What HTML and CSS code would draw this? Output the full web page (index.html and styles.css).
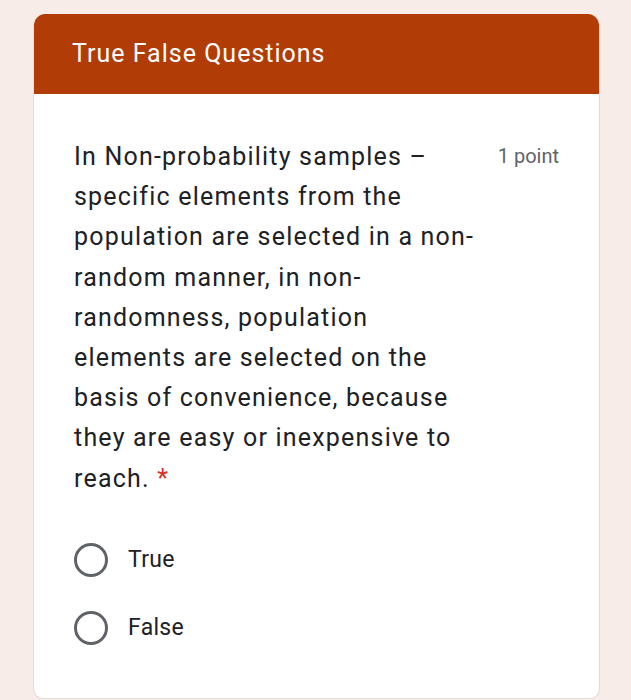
FILE: index.html
```html
<!DOCTYPE html>
<html lang="en">
<head>
    <meta charset="UTF-8">
    <meta name="viewport" content="width=device-width, initial-scale=1.0">
    <title>True False Questions</title>
    <link rel="stylesheet" href="styles.css">
</head>
<body>
    <div class="card">
        <div class="card-header">
            <h1>True False Questions</h1>
        </div>

        <!-- question -->
        <div class="question">
            <div class="question-top">
                <p class="question-text">In Non-probability samples –<br>specific elements from the<br>population are selected in a non-<br>random manner, in non-<br>randomness, population<br>elements are selected on the<br>basis of convenience, because<br>they are easy or inexpensive to<br>reach. <span class="required">*</span></p>
                <span class="points">1 point</span>
            </div>

            <label class="option">
                <span class="radio"></span>
                <span class="option-label">True</span>
            </label>
            <label class="option">
                <span class="radio"></span>
                <span class="option-label">False</span>
            </label>
        </div>
    </div>
</body>
</html>
```

FILE: styles.css
```css
body {
    margin: 0;
    padding: 14px 31px 0 33px;
    background-color: #f7ece7;
    font-family: Roboto, "Open Sans", sans-serif;
    color: #202124;
}
.card {
    background-color: white;
    border-radius: 12px 12px 10px 10px;
    border: 1px solid #e3dcd9;
    border-top: none;
    height: 684px;
    overflow: hidden;
}
.card-header {
    background-color: #b23c05;
    height: 80px;
    padding: 0 38px;
    display: flex;
    align-items: center;
}
.card-header h1 {
    margin: 0 0 2px;
    font-size: 25px;
    font-weight: 400;
    letter-spacing: 1px;
    color: white;
}
.question {
    padding: 43px 40px 0 40px;
}
.question-top {
    display: flex;
    justify-content: space-between;
    align-items: flex-start;
}
.question-text {
    margin: 0;
    font-size: 25px;
    line-height: 40.2px;
    letter-spacing: 1.2px;
}
.required {
    color: #d93025;
}
.points {
    font-size: 20px;
    color: #5f6368;
    margin-top: 7px;
}
.option {
    display: flex;
    align-items: center;
    height: 34px;
}
.option + .option {
    margin-top: 34px;
}
.question-top + .option {
    margin-top: 44px;
}
.radio {
    width: 28px;
    height: 28px;
    border: 3px solid #5f6368;
    border-radius: 50%;
    margin-right: 20px;
}
.option-label {
    font-size: 23px;
    letter-spacing: 0.3px;
}
```
